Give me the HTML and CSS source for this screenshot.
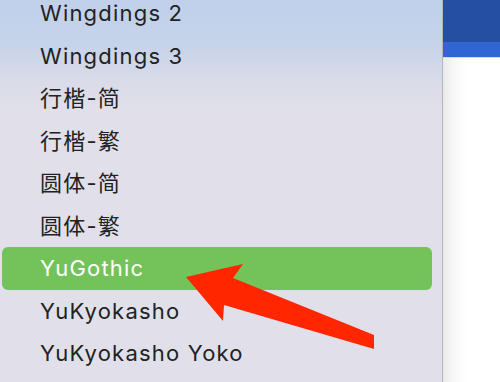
FILE: index.html
```html
<!DOCTYPE html>
<html lang="en">
<head>
    <meta charset="UTF-8">
    <title>Font menu</title>
    <link rel="stylesheet" href="styles.css">
</head>
<body>
    <div class="screen">
        <div class="font-menu">
            <ul class="font-list">
                <li class="font-item">Wingdings 2</li>
                <li class="font-item">Wingdings 3</li>
                <li class="font-item">行楷-简</li>
                <li class="font-item">行楷-繁</li>
                <li class="font-item">圆体-简</li>
                <li class="font-item">圆体-繁</li>
                <li class="font-item selected">YuGothic</li>
                <li class="font-item">YuKyokasho</li>
                <li class="font-item">YuKyokasho Yoko</li>
            </ul>
        </div>
        <div class="window-edge">
            <div class="title-bar"></div>
            <div class="tab-bar"></div>
            <div class="doc"></div>
        </div>

        <!-- annotation arrow pointing at the selected font -->
        <svg class="arrow" width="500" height="382" viewBox="0 0 500 382">
            <polygon points="186,277 243,264 233,278 374,335 374,349 224,305 223,321" fill="#ff2600"/>
        </svg>
    </div>
</body>
</html>
```

FILE: styles.css
```css
* {
    margin: 0;
    padding: 0;
    box-sizing: border-box;
}

body {
    width: 500px;
    height: 382px;
    overflow: hidden;
    font-family: Inter, "Noto Sans CJK SC", sans-serif;
}

.screen {
    position: relative;
    display: flex;
    width: 500px;
    height: 382px;
}

.font-menu {
    width: 443px;
    height: 382px;
    border-right: 1px solid #b4b4bc;
    background: linear-gradient(to bottom, #c0d0eb 0px, #c6d3ea 45px, #d9dbe9 80px, #e1e0ea 110px, #e1e0ea 100%);
    overflow: hidden;
}

.font-list {
    list-style: none;
    margin-top: -8px;
}

.font-item {
    height: 42.5px;
    line-height: 42.5px;
    margin: 0 10px 0 2px;
    padding-left: 38px;
    font-size: 22px;
    letter-spacing: 1.2px;
    color: #222;
    white-space: nowrap;
}

.font-item.selected {
    background-color: #74c35a;
    color: #fff;
    border-radius: 6px;
}

.window-edge {
    flex: 1;
    display: flex;
    flex-direction: column;
}

.title-bar {
    height: 42px;
    background-color: #244fa2;
}

.tab-bar {
    height: 16px;
    background-color: #2f66d3;
    border-bottom: 1px solid #d8d8d8;
}

.doc {
    flex: 1;
    background: linear-gradient(to right, #e9e9e9 0px, #f7f7f7 10px, #fff 24px);
}

.arrow {
    position: absolute;
    left: 0;
    top: 0;
    pointer-events: none;
}
```
